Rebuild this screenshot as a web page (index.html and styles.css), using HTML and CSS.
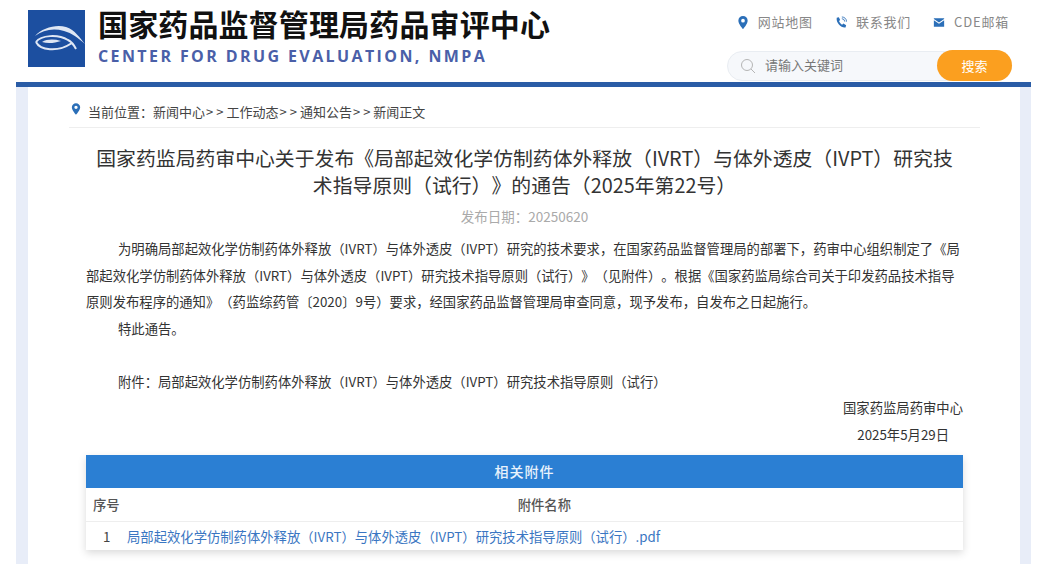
FILE: index.html
```html
<!DOCTYPE html>
<html lang="zh-CN">
<head>
  <meta charset="UTF-8">
  <title>国家药品监督管理局药品审评中心</title>
  <link rel="stylesheet" href="styles.css">
</head>
<body>
  <div class="page">
    <header class="topbar">
      <svg class="logo" viewBox="0 0 57 57" aria-label="CDE">
        <rect width="57" height="57" fill="#1c4fa0"/>
        <path d="M7 26C14 18 28 14 38 17C47 20 52 28 57 34C50 28 44 23 36 21C25 18 15 20 7 26Z" fill="#dfe7f4"/>
        <path d="M8 32C13 25 30 24 40 30C44 32 46 35 48 39M8 32C12 40 29 43 44 33" fill="none" stroke="#dfe7f4" stroke-width="2"/>
        <path d="M14 32C19 29 26 29 33 31C27 33 20 34 14 32Z" fill="#dfe7f4"/>
      </svg>
      <div class="brand">
        <div class="brand-cn">国家药品监督管理局药品审评中心</div>
        <div class="brand-en">CENTER FOR DRUG EVALUATION, NMPA</div>
      </div>
      <div class="tools">
        <nav class="links">
          <a class="link">
            <svg viewBox="0 0 12 14"><path fill-rule="evenodd" d="M6 0a5 5 0 0 1 5 5c0 3.500-5 9-5 9S1 8.500 1 5a5 5 0 0 1 5-5Zm0 3a2 2 0 1 0 0 4 2 2 0 0 0 0-4Z" fill="#2b6fb8"/></svg>
            网站地图
          </a>
          <a class="link">
            <svg viewBox="0 0 14 14"><path d="M2 1.500 4.500 1 6 4 4.700 5.300C5.300 7 6.500 8.500 8.300 9.500L9.800 8.300 13 10.200 12.300 12.800C8 14 1 8 2 1.500Z" fill="#2b6fb8"/><path d="M8 2.500A4 4 0 0 1 11.500 6M8 .5A6 6 0 0 1 13.500 6" fill="none" stroke="#2b6fb8" stroke-width="1"/></svg>
            联系我们
          </a>
          <a class="link">
            <svg viewBox="0 0 14 12"><path d="M1 1h12v1L7 6 1 2ZM1 3.500 7 7.500l6-4V11H1Z" fill="#2b6fb8"/></svg>
            CDE邮箱
          </a>
        </nav>
        <div class="search">
          <svg class="search-icon" viewBox="0 0 16 16"><circle cx="7" cy="7" r="5.500" fill="none" stroke="#b5b5b5" stroke-width="1"/><path d="M11 11l4 4" stroke="#b5b5b5" stroke-width="1"/></svg>
          <span class="search-text">请输入关键词</span>
          <button class="search-btn">搜索</button>
        </div>
      </div>
    </header>

    <div class="band">
      <div class="sheet">
        <div class="crumb">
          <svg viewBox="0 0 12 14"><path fill-rule="evenodd" d="M6 0a5 5 0 0 1 5 5c0 3.500-5 9-5 9S1 8.500 1 5a5 5 0 0 1 5-5Zm0 3a2 2 0 1 0 0 4 2 2 0 0 0 0-4Z" fill="#2b6fb8"/></svg>
          <span>当前位置：新闻中心<i class="sep">&gt;&gt;</i>工作动态<i class="sep">&gt;&gt;</i>通知公告<i class="sep">&gt;&gt;</i>新闻正文</span>
        </div>
        <article class="article">
          <h1 class="title">国家药监局药审中心关于发布《局部起效化学仿制药体外释放（IVRT）与体外透皮（IVPT）研究技术指导原则（试行）》的通告（2025年第22号）</h1>
          <div class="date">发布日期：20250620</div>
          <p class="para">为明确局部起效化学仿制药体外释放（IVRT）与体外透皮（IVPT）研究的技术要求，在国家药品监督管理局的部署下，药审中心组织制定了《局部起效化学仿制药体外释放（IVRT）与体外透皮（IVPT）研究技术指导原则（试行）》（见附件）。根据《国家药监局综合司关于印发药品技术指导原则发布程序的通知》（药监综药管〔2020〕9号）要求，经国家药品监督管理局审查同意，现予发布，自发布之日起施行。</p>
          <p class="para">特此通告。</p>
          <p class="para blank">&nbsp;</p>
          <p class="para">附件：局部起效化学仿制药体外释放（IVRT）与体外透皮（IVPT）研究技术指导原则（试行）</p>
          <p class="sign">国家药监局药审中心</p>
          <p class="sign sign-date">2025年5月29日</p>
        </article>
        <section class="attach">
          <div class="attach-head">相关附件</div>
          <div class="attach-row attach-cols">
            <span class="col-no">序号</span>
            <span class="col-name">附件名称</span>
          </div>
          <div class="attach-row attach-file">
            <span class="col-idx">1</span>
            <a class="file-link">局部起效化学仿制药体外释放（IVRT）与体外透皮（IVPT）研究技术指导原则（试行）.pdf</a>
          </div>
        </section>
      </div>
    </div>
  </div>
</body>
</html>
```

FILE: styles.css
```css
* {
  margin: 0;
  padding: 0;
  box-sizing: border-box;
}

html, body {
  height: 100%;
  overflow: hidden;
}

body {
  background: #fff;
  font-family: "Noto Sans CJK SC", "Liberation Sans", sans-serif;
  color: #333;
  text-spacing-trim: space-all;
}

.page {
  width: 1015px;
  height: 564px;
  margin-left: 16px;
  display: flex;
  flex-direction: column;
}

/* Header */
.topbar {
  height: 82px;
  padding: 10px 19px 0 12px;
  display: flex;
  flex-shrink: 0;
}

.logo {
  width: 57px;
  height: 57px;
  flex-shrink: 0;
}

.brand {
  margin-left: 13px;
  flex: 1;
}

.brand-cn {
  margin-top: -2px;
  font-size: 30px;
  font-weight: 700;
  line-height: 30px;
  letter-spacing: 0.14px;
  color: #111;
  white-space: nowrap;
}

.brand-en {
  margin-top: 8px;
  font-family: "Open Sans", "Liberation Sans", sans-serif;
  font-size: 16px;
  font-weight: 700;
  line-height: 20px;
  letter-spacing: 2.4px;
  color: #4a5fa8;
  white-space: nowrap;
}

.tools {
  width: 285px;
  display: flex;
  flex-direction: column;
  align-items: flex-end;
}

.links {
  display: flex;
  gap: 22px;
  margin-top: -1px;
  margin-right: 3px;
  height: 24px;
  align-items: center;
  white-space: nowrap;
}

.link {
  display: flex;
  align-items: center;
  gap: 9px;
  font-size: 13px;
  color: #888;
  letter-spacing: 0.8px;
}

.link svg {
  width: 12px;
  height: 13px;
  margin-top: 2px;
  flex-shrink: 0;
}

.search {
  margin-top: 18px;
  width: 285px;
  height: 30px;
  display: flex;
  align-items: center;
  background: #f6f8fb;
  border: 1px solid #e9edf2;
  border-radius: 15px;
  padding-left: 12px;
  position: relative;
}

.search-icon {
  width: 16px;
  height: 16px;
}

.search-text {
  margin: -3px 0 0 9px;
  font-size: 13px;
  color: #777;
}

.search-btn {
  position: absolute;
  right: -1px;
  top: -2px;
  width: 75px;
  height: 31px;
  border: none;
  border-radius: 16px;
  background: #fb9f1f;
  color: #fff;
  font-family: inherit;
  font-size: 13px;
}

/* Body band */
.band {
  flex: 1;
  border-top: 5px solid #2a5ca6;
  background: #e8edf8;
  padding: 0 11px 0 12px;
  min-height: 0;
}

.sheet {
  height: 100%;
  background: #fff;
  padding: 0 40px 0 41px;
}

.crumb {
  height: 41px;
  display: flex;
  align-items: center;
  gap: 7px;
  padding: 8px 0 0 2px;
  border-bottom: 1px solid #eee;
  font-size: 13px;
  color: #444;
}

.crumb svg {
  width: 10px;
  height: 14px;
  margin-top: -4px;
}

.sep {
  font-style: normal;
  letter-spacing: 3px;
  margin-left: 1px;
}

.article {
  padding: 0 17px;
}

.title {
  margin-top: 16px;
  padding: 0 6px;
  font-size: 19.850px;
  font-weight: 400;
  line-height: 27px;
  text-align: center;
  color: #333;
}

.date {
  margin-top: 6px;
  font-size: 13.500px;
  line-height: 24px;
  text-align: center;
  color: #aaa;
}

.para {
  margin-top: 0;
  font-size: 13.330px;
  line-height: 26.500px;
  text-indent: 32px;
  color: #333;
}

.date + .para {
  margin-top: 8px;
}

.sign {
  font-size: 13.330px;
  line-height: 26.500px;
  text-align: right;
}

.sign-date {
  padding-right: 14px;
}

/* Attachments */
.attach {
  margin: 7px 17px 0;
  box-shadow: 0 3px 8px rgba(0, 0, 0, 0.15);
}

.attach-head {
  height: 33px;
  line-height: 33px;
  text-align: center;
  background: #2b7fd3;
  color: #e8f2fc;
  font-size: 14px;
  font-weight: 500;
  letter-spacing: 1px;
}

.attach-row {
  display: flex;
  align-items: center;
  background: #fff;
  font-size: 13.330px;
}

.attach-cols {
  height: 34px;
  padding-left: 7px;
  border-bottom: 1px solid #eee;
  color: #555;
  font-weight: 500;
}

.col-name {
  margin-left: 398px;
}

.attach-file {
  height: 28px;
}

.col-idx {
  width: 41px;
  padding-left: 17px;
  color: #444;
}

.file-link {
  color: #3a76c2;
}
```
